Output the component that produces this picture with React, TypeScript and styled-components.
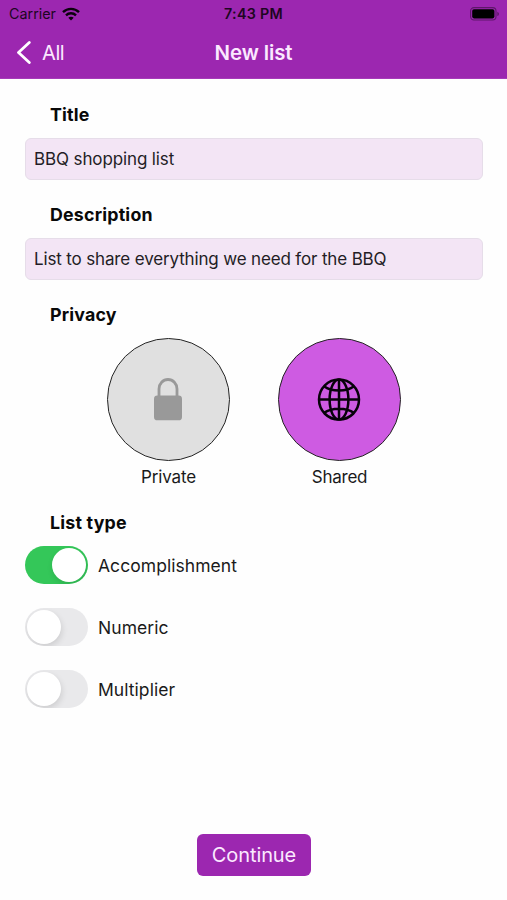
import React from "react";
import styled, { createGlobalStyle } from "styled-components";

const GlobalStyle = createGlobalStyle`
  * { box-sizing: border-box; }
  body {
    margin: 0;
    background: #fefefe;
    color: #111;
    font-family: Inter, "Liberation Sans", sans-serif;
  }
`;

const Screen = styled.div`
  width: 507px;
  height: 900px;
  display: flex;
  flex-direction: column;
  background: #fefefe;
  overflow: hidden;
`;

const Header = styled.header`
  height: 79px;
  flex: none;
  background: #9c27b0;
  border-bottom: 1px solid #a63bb9;
`;

const StatusBar = styled.div`
  height: 27px;
  padding: 0 7px 0 9px;
  display: grid;
  grid-template-columns: 1fr auto 1fr;
  align-items: center;
  color: #1d0622;
`;

const Carrier = styled.div`
  display: flex;
  align-items: center;
  gap: 6px;
  font-size: 14.3px;
  letter-spacing: 0.02px;
`;

const Clock = styled.div`
  margin-right: 2px;
  font-size: 14.3px;
  font-weight: 600;
  letter-spacing: 0.3px;
`;

const BatterySlot = styled.div`
  display: flex;
  justify-content: flex-end;
`;

const NavBar = styled.nav`
  height: 51px;
  padding: 0 16px;
  display: grid;
  grid-template-columns: 1fr auto 1fr;
  align-items: center;
  color: #fbe9ff;
`;

const BackButton = styled.button`
  display: flex;
  align-items: center;
  gap: 10px;
  padding: 0;
  border: 0;
  background: none;
  color: inherit;
  font-family: inherit;
  font-size: 20px;
  letter-spacing: -0.4px;
`;

const NavTitle = styled.h1`
  margin: 0;
  font-size: 20.4px;
  font-weight: 570;
  letter-spacing: -0.1px;
`;

const Form = styled.main`
  flex: 1;
  display: flex;
  flex-direction: column;
  padding: 26px 24px 24px 25px;
`;

const Section = styled.section<{ $after: number }>`
  display: flex;
  flex-direction: column;
  gap: 13px;
  margin-bottom: ${(p) => p.$after}px;
`;

const Label = styled.h2`
  margin: 0;
  padding-left: 25px;
  line-height: 20px;
  font-size: 17.8px;
  font-weight: 680;
  letter-spacing: 0.2px;
  color: #090909;
`;

const Field = styled.input<{ $spacing: number }>`
  width: 458px;
  height: 42px;
  padding: 0 8px;
  border: 1px solid #e6dde9;
  border-radius: 6px;
  outline: 0;
  background: #f3e5f5;
  color: #231d25;
  font-family: inherit;
  font-size: 17px;
  letter-spacing: ${(p) => p.$spacing}px;
`;

const Choices = styled.div`
  display: flex;
  justify-content: center;
  gap: 48px;
`;

const Choice = styled.div`
  width: 123px;
  display: flex;
  flex-direction: column;
  align-items: center;
  gap: 6px;
`;

const Disc = styled.div<{ $active?: boolean }>`
  width: 123px;
  height: 123px;
  padding-right: 1px;
  display: flex;
  align-items: center;
  justify-content: center;
  border: 1.3px solid #242424;
  border-radius: 50%;
  background: ${(p) => (p.$active ? "#ce5be2" : "#e0e0e0")};
`;

const Caption = styled.span<{ $spacing: number }>`
  font-size: 17px;
  line-height: 20px;
  letter-spacing: ${(p) => p.$spacing}px;
  color: #1a1a1a;
`;

const Options = styled.div`
  display: flex;
  flex-direction: column;
  gap: 24px;
`;

const Option = styled.div`
  height: 38px;
  display: flex;
  align-items: center;
  gap: 10px;
`;

const OptionName = styled.span`
  padding-top: 1px;
  font-size: 17.5px;
  line-height: 20px;
  letter-spacing: 0.05px;
  color: #1a1a1a;
`;

const Switch = styled.div<{ $on?: boolean }>`
  width: 63px;
  height: 38px;
  padding: 2px;
  display: flex;
  justify-content: ${(p) => (p.$on ? "flex-end" : "flex-start")};
  border-radius: 19px;
  overflow: hidden;
  background: ${(p) => (p.$on ? "#34c759" : "#e9e9eb")};
`;

const Knob = styled.div`
  width: 34px;
  height: 34px;
  border-radius: 50%;
  background: #fff;
  box-shadow: 1px 3px 6px rgba(0, 0, 0, 0.12);
`;

const Submit = styled.button`
  width: 114px;
  height: 42px;
  margin: auto auto 0;
  padding: 0;
  border: 0;
  border-radius: 6px;
  background: #9c27b0;
  color: #fbe9ff;
  font-family: inherit;
  font-size: 20px;
  letter-spacing: -0.1px;
`;

const WifiIcon = () => (
  <svg width="18" height="14" viewBox="0 0 18 14" fill="none" stroke="#0b020d" strokeWidth="2.4">
    <path d="M1 5.1C5.5.8 12.5.8 17 5.1" />
    <path d="M4 8.3C6.8 5.6 11.2 5.6 14 8.3" />
    <path d="M9 13.5 6.3 10.8C7.8 9.5 10.2 9.5 11.7 10.8Z" fill="#0b020d" stroke="none" />
  </svg>
);

const BatteryIcon = () => (
  <svg width="30" height="14" viewBox="0 0 30 14">
    <rect x=".6" y=".6" width="25.4" height="12.4" rx="3.4" fill="none" stroke="#5e176a" strokeWidth="1.1" />
    <rect x="2.2" y="2.2" width="22.2" height="9.2" rx="1.8" fill="#000" />
    <path d="M27.3 4.7c2.2.8 2.2 3.6 0 4.4z" fill="#5e176a" />
  </svg>
);

const BackIcon = () => (
  <svg width="16" height="24" viewBox="0 0 16 24" fill="none" stroke="#fff" strokeWidth="2.8" strokeLinecap="round" strokeLinejoin="round">
    <path d="M13.3 1.5 2.5 11.5 13.3 21.5" />
  </svg>
);

const LockIcon = () => (
  <svg width="30" height="44" viewBox="0 0 30 44">
    <path d="M6 19V11a9 9.5 0 0 1 18 0V19" fill="none" stroke="#999" strokeWidth="2.8" />
    <rect x="1" y="17.6" width="28" height="24.7" rx="3.4" fill="#999" />
  </svg>
);

const GlobeIcon = () => (
  <svg width="44" height="44" viewBox="0 0 44 44" fill="none" stroke="#08020a" strokeWidth="2.5">
    <circle cx="22" cy="21.6" r="20" />
    <ellipse cx="22" cy="21.6" rx="9.4" ry="20" />
    <path d="M22 1.6V41.6M2 21.6H42M7 8.3C14.5 14 29.5 14 37 8.3M7 34.9C14.5 29.2 29.5 29.2 37 34.9" />
  </svg>
);

const options = [
  { name: "Accomplishment", on: true },
  { name: "Numeric", on: false },
  { name: "Multiplier", on: false },
];

export default function App() {
  return (
    <Screen>
      <GlobalStyle />
      <Header>
        <StatusBar>
          <Carrier>
            Carrier
            <WifiIcon />
          </Carrier>
          <Clock>7:43 PM</Clock>
          <BatterySlot>
            <BatteryIcon />
          </BatterySlot>
        </StatusBar>
        <NavBar>
          <BackButton>
            <BackIcon />
            All
          </BackButton>
          <NavTitle>New list</NavTitle>
        </NavBar>
      </Header>
      <Form>
        <Section $after={25}>
          <Label>Title</Label>
          <Field $spacing={-0.12} defaultValue="BBQ shopping list" />
        </Section>
        <Section $after={25}>
          <Label>Description</Label>
          <Field $spacing={-0.15} defaultValue="List to share everything we need for the BBQ" />
        </Section>
        <Section $after={26}>
          <Label>Privacy</Label>
          <Choices>
            <Choice>
              <Disc>
                <LockIcon />
              </Disc>
              <Caption $spacing={-0.15}>Private</Caption>
            </Choice>
            <Choice>
              <Disc $active>
                <GlobeIcon />
              </Disc>
              <Caption $spacing={-0.25}>Shared</Caption>
            </Choice>
          </Choices>
        </Section>
        <Section $after={0}>
          <Label>List type</Label>
          <Options>
            {options.map((o) => (
              <Option key={o.name}>
                <Switch $on={o.on}>
                  <Knob />
                </Switch>
                <OptionName>{o.name}</OptionName>
              </Option>
            ))}
          </Options>
        </Section>
        <Submit>Continue</Submit>
      </Form>
    </Screen>
  );
}
